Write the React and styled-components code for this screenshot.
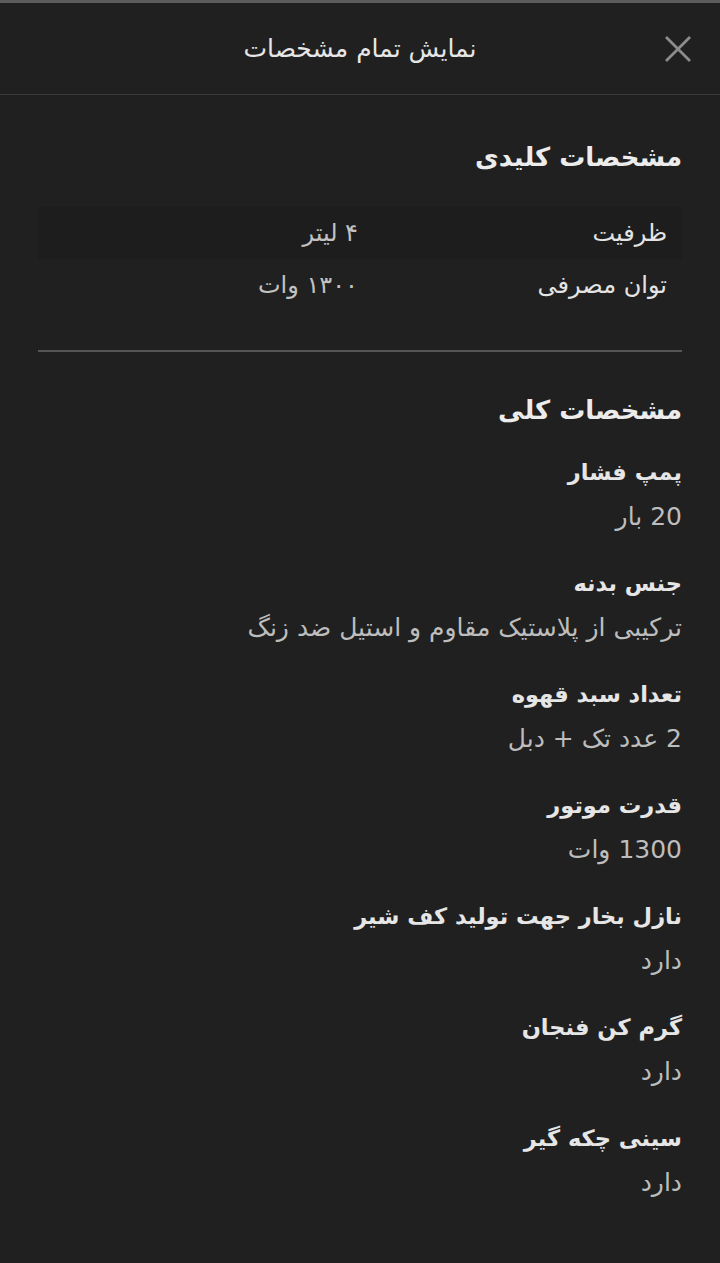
import styled, { createGlobalStyle } from "styled-components";

const GlobalStyle = createGlobalStyle`
  html, body {
    margin: 0;
    padding: 0;
    background: #202020;
  }
  body {
    font-family: "DejaVu Sans", "Noto Sans Arabic", sans-serif;
  }
`;

const Page = styled.div`
  direction: rtl;
  min-height: 1263px;
  background: #202020;
  border-top: 3px solid #5c5c5c;
  box-sizing: border-box;
`;

const Header = styled.header`
  position: relative;
  height: 91px;
  display: flex;
  align-items: center;
  justify-content: center;
  border-bottom: 1px solid #3a3a3a;
`;

const HeaderTitle = styled.h1`
  margin: 0;
  font-size: 25px;
  font-weight: 400;
  color: #e6e6e6;
`;

const CloseButton = styled.button`
  position: absolute;
  right: 26px;
  top: 50%;
  transform: translateY(-50%);
  width: 32px;
  height: 32px;
  padding: 0;
  border: none;
  background: none;
  display: flex;
  align-items: center;
  justify-content: center;
  cursor: pointer;
`;

const Content = styled.main`
  padding: 40px 38px 40px;
`;

const SectionTitle = styled.h2`
  margin: 0;
  font-size: 26px;
  font-weight: 700;
  color: #ececec;
  line-height: 44px;
`;

const KeyTable = styled.div`
  margin-top: 28px;
  display: flex;
  flex-direction: column;
`;

const KeyRow = styled.div`
  display: grid;
  grid-template-columns: 322px 1fr;
  height: 52px;
  align-items: center;
  background: ${(p) => (p.$shaded ? "#1d1d1e" : "transparent")};
`;

const KeyLabel = styled.span`
  padding-right: 15px;
  font-size: 24px;
  color: #e4e4e4;
`;

const KeyValue = styled.span`
  padding-right: 2px;
  font-size: 24px;
  color: #c2c2c2;
`;

const Divider = styled.hr`
  margin: 39px 0 36px;
  border: none;
  border-top: 2px solid #555555;
`;

const SpecList = styled.div`
  margin-top: 22px;
  display: flex;
  flex-direction: column;
  gap: 30px;
`;

const SpecItem = styled.div`
  display: flex;
  flex-direction: column;
  gap: 9px;
`;

const SpecTitle = styled.span`
  font-size: 22.5px;
  font-weight: 700;
  color: #e6e6e6;
  line-height: 36px;
`;

const SpecValue = styled.span`
  font-size: 25px;
  color: #bdbdbd;
  line-height: 36px;
`;

const keySpecs = [
  ["ظرفیت", "۴ لیتر"],
  ["توان مصرفی", "۱۳۰۰ وات"],
];

const specs = [
  ["پمپ فشار", "20 بار"],
  ["جنس بدنه", "ترکیبی از پلاستیک مقاوم و استیل ضد زنگ"],
  ["تعداد سبد قهوه", "2 عدد تک + دبل"],
  ["قدرت موتور", "1300 وات"],
  ["نازل بخار جهت تولید کف شیر", "دارد"],
  ["گرم کن فنجان", "دارد"],
  ["سینی چکه گیر", "دارد"],
];

export default function App() {
  return (
    <Page>
      <GlobalStyle />
      <Header>
        <HeaderTitle>نمایش تمام مشخصات</HeaderTitle>
        <CloseButton aria-label="بستن">
          <svg width="28" height="28" viewBox="0 0 28 28">
            <path
              d="M2 2 L26 26 M26 2 L2 26"
              stroke="#8c8c8c"
              strokeWidth="2.8"
            />
          </svg>
        </CloseButton>
      </Header>
      <Content>
        <SectionTitle>مشخصات کلیدی</SectionTitle>
        <KeyTable>
          {keySpecs.map(([label, value], i) => (
            <KeyRow key={label} $shaded={i % 2 === 0}>
              <KeyLabel>{label}</KeyLabel>
              <KeyValue>{value}</KeyValue>
            </KeyRow>
          ))}
        </KeyTable>
        <Divider />
        <SectionTitle>مشخصات کلی</SectionTitle>
        <SpecList>
          {specs.map(([title, value]) => (
            <SpecItem key={title}>
              <SpecTitle>{title}</SpecTitle>
              <SpecValue>{value}</SpecValue>
            </SpecItem>
          ))}
        </SpecList>
      </Content>
    </Page>
  );
}
